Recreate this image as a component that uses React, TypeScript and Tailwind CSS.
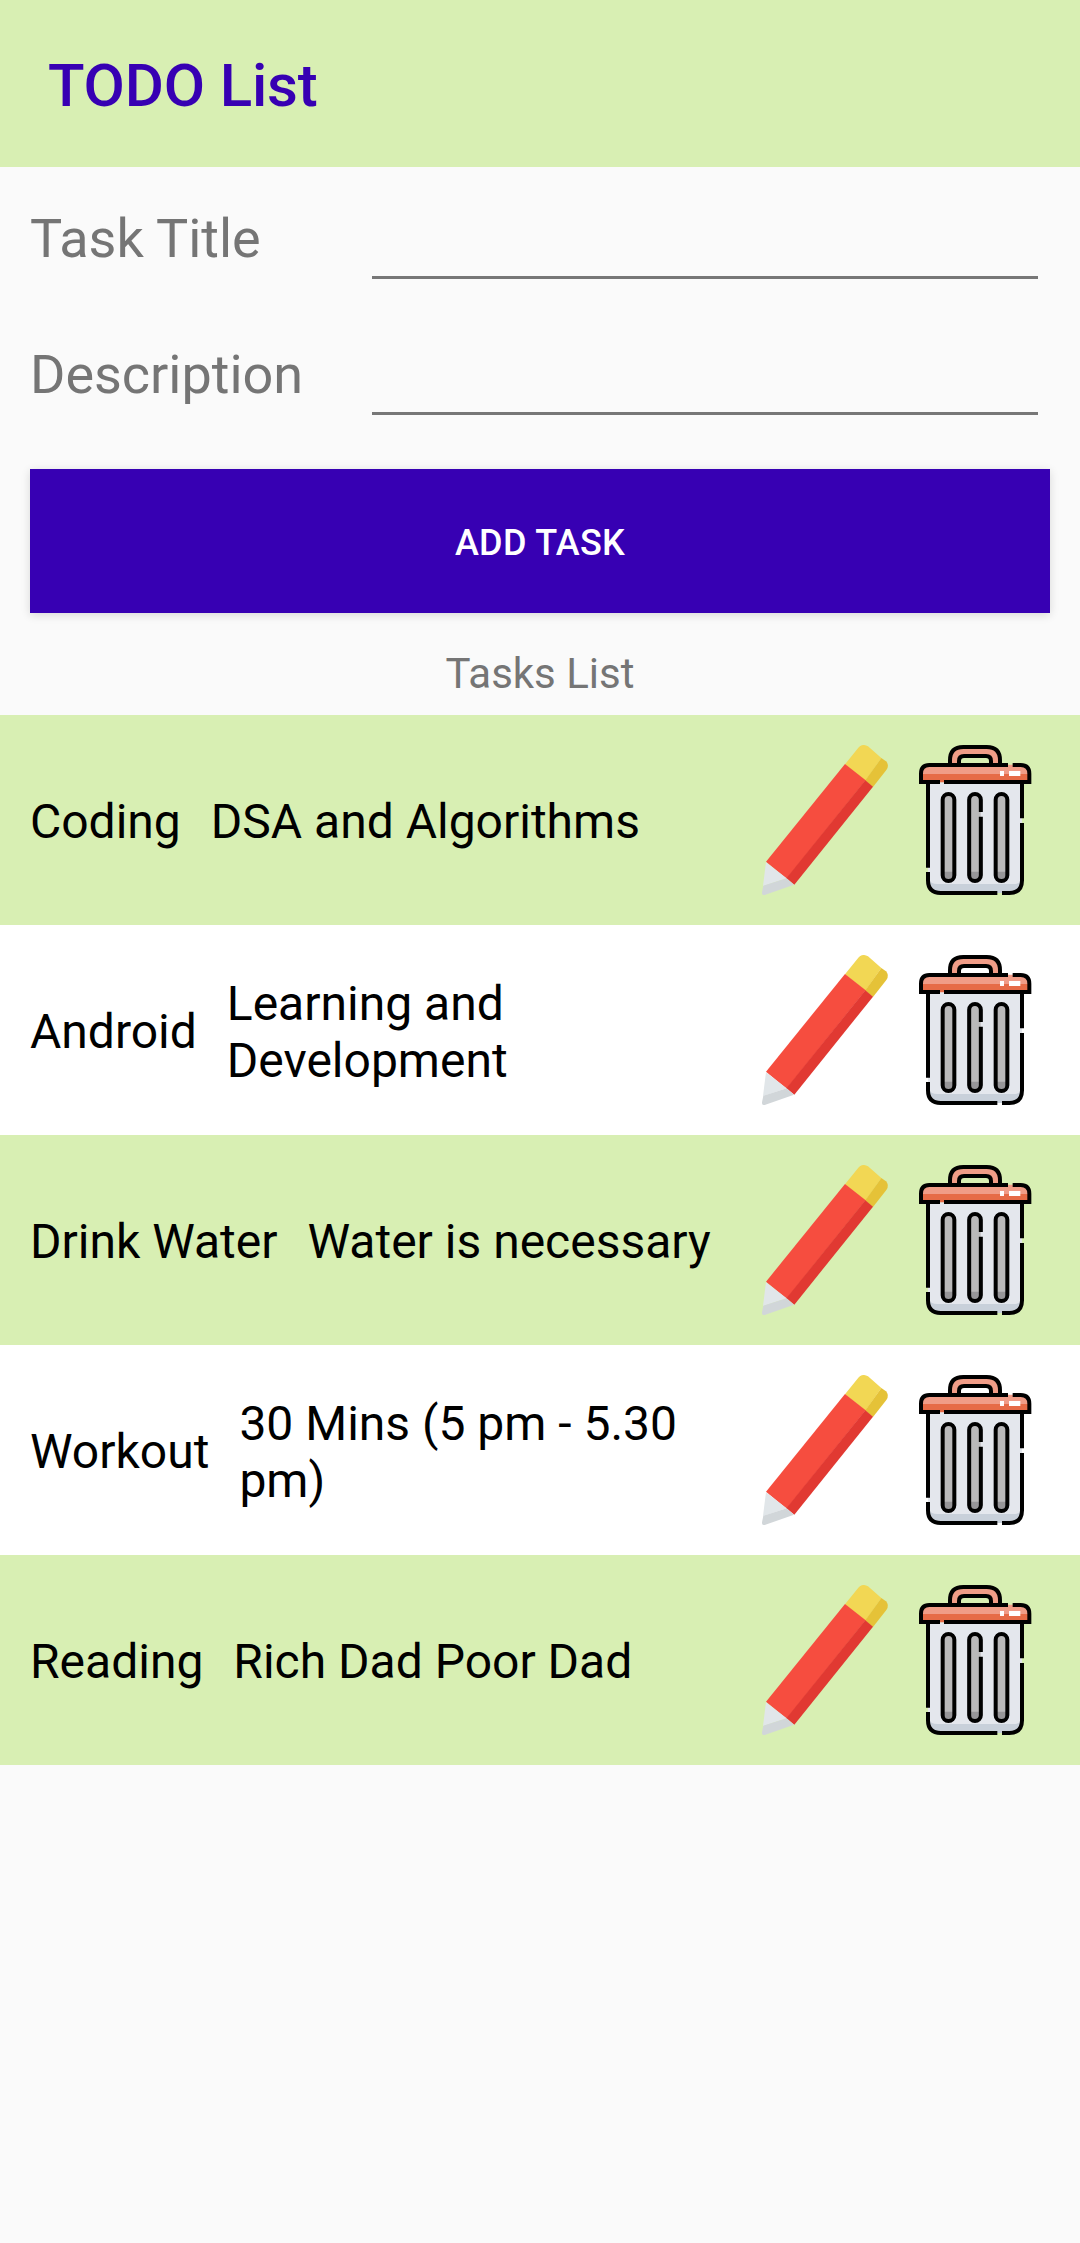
const tasks = [
  { title: 'Coding', description: 'DSA and Algorithms' },
  { title: 'Android', description: 'Learning and Development' },
  { title: 'Drink Water', description: 'Water is necessary' },
  { title: 'Workout', description: '30 Mins (5 pm - 5.30 pm)' },
  { title: 'Reading', description: 'Rich Dad Poor Dad' },
];

function PencilIcon() {
  return (
    <svg viewBox="30 60 450 450" className="size-[150px] shrink-0">
      <path d="M315 118L352 72Q366 53 384 64L424 99L376 167Z" fill="#f2d754" />
      <path d="M424 99L438 109Q449 121 439 135L399 186L375 167Z" fill="#e5c238" />
      <path d="M315 117L377 166L140 461L78 410Z" fill="#f64d3f" />
      <path d="M376 166L399 185L163 479L139 460Z" fill="#e13932" />
      <path d="M78 412L140 460L69 483Z" fill="#e1e6e9" />
      <path d="M140 460L162 479L74 510Q65 511 66 502L70 482Z" fill="#d1d6d9" />
    </svg>
  );
}

function TrashIcon() {
  return (
    <svg viewBox="0 60 450 450" className="size-[150px] shrink-0" fill="none">
      <path d="M84 172H366V462Q366 504 330 504H120Q84 504 84 462Z" fill="#e4e7ed" />
      <path d="M84 462Q92 477 112 477H340Q360 477 366 462Q366 504 330 504H120Q84 504 84 462Z" fill="#c8d0da" />
      <path d="M151 118V106Q151 66 191 66H259Q299 66 299 106V118H277V106Q275 93 259 93H191Q175 93 173 106V118Z" fill="#f09c87" />
      <path d="M62 148V145Q62 119 88 119H362Q388 119 388 145V148Z" fill="#f09c87" />
      <path d="M62 147H388V172H62Z" fill="#e66b47" />
      <path d="M300 138H312V153H300ZM327 138H361V153H327Z" fill="#fff" />
      <g stroke="#000" strokeWidth="12">
        <path d="M150 118V106Q150 66 190 66H260Q300 66 300 106V118" />
        <path d="M177 116V108Q177 93 192 93H258Q273 93 273 108V116" />
        <path d="M324 120H88Q63 120 63 146V171H120M132 171H388V146Q388 120 362 120H338" />
        <path d="M84 174V428M84 441V466Q84 504 122 504H292M306 504H328Q366 504 366 466V294M366 280V174" />
      </g>
      <g strokeWidth="12">
        <rect x="128" y="207" width="35" height="261" rx="17" fill="#bab9ba" />
        <rect x="207" y="207" width="35" height="261" rx="17" fill="#bab9ba" />
        <rect x="287" y="207" width="35" height="261" rx="17" fill="#bab9ba" />
        <path d="M128 440H163V450Q163 468 145.500 468Q128 468 128 450ZM207 440H242V450Q242 468 224.500 468Q207 468 207 450ZM287 440H322V450Q322 468 304.500 468Q287 468 287 450Z" fill="#979699" />
        <rect x="128" y="207" width="35" height="261" rx="17.500" stroke="#000" />
        <rect x="287" y="207" width="35" height="261" rx="17.500" stroke="#000" />
        <path d="M242.500 261V224.500A17.500 17.500 0 0 0 207.500 224.500V450.500A17.500 17.500 0 0 0 242.500 450.500V275" stroke="#000" />
      </g>
    </svg>
  );
}

function Field({ label }: { label: string }) {
  return (
    <label className="flex h-[136px] items-start pl-[30px] pr-[42px]">
      <span className="w-[342px] pt-10 text-[54px] leading-[64px] tracking-[-0.03px] text-[#757575]">{label}</span>
      <input className="h-[112px] min-w-0 flex-1 border-b-[3px] border-[#777] bg-transparent text-[54px] outline-none" />
    </label>
  );
}

export default function App() {
  return (
    <div className="flex min-h-[2243px] w-[1080px] flex-col bg-[#fafafa] font-['Roboto',sans-serif]">
      <header className="flex h-[167px] items-center bg-[#d8efb3] pl-12">
        <h1 className="pt-[5px] text-[60px] leading-[70px] font-medium tracking-[-0.17px] text-[#3700b3]">TODO List</h1>
      </header>
      <form className="flex flex-col">
        <Field label="Task Title" />
        <Field label="Description" />
        <button
          type="button"
          className="mx-[30px] mt-[30px] h-36 bg-[#3700b3] pt-[3px] text-[36px] font-medium tracking-[0.3px] text-white shadow-[0_2px_9px_rgba(0,0,0,0.14)]"
        >
          ADD TASK
        </button>
      </form>
      <h2 className="pt-9 pb-4 text-center text-[42px] leading-[50px] text-[#757575]">Tasks List</h2>
      <ul className="flex flex-col">
        {tasks.map((task) => (
          <li key={task.title} className="flex h-[210px] items-center gap-[30px] bg-white px-[30px] text-[48px] leading-[57px] text-black odd:bg-[#d8efb3]">
            <span className="shrink-0 pt-[3px]">{task.title}</span>
            <span className="min-w-0 flex-1 pt-[3px]">{task.description}</span>
            <span className="flex">
              <PencilIcon />
              <TrashIcon />
            </span>
          </li>
        ))}
      </ul>
    </div>
  );
}
